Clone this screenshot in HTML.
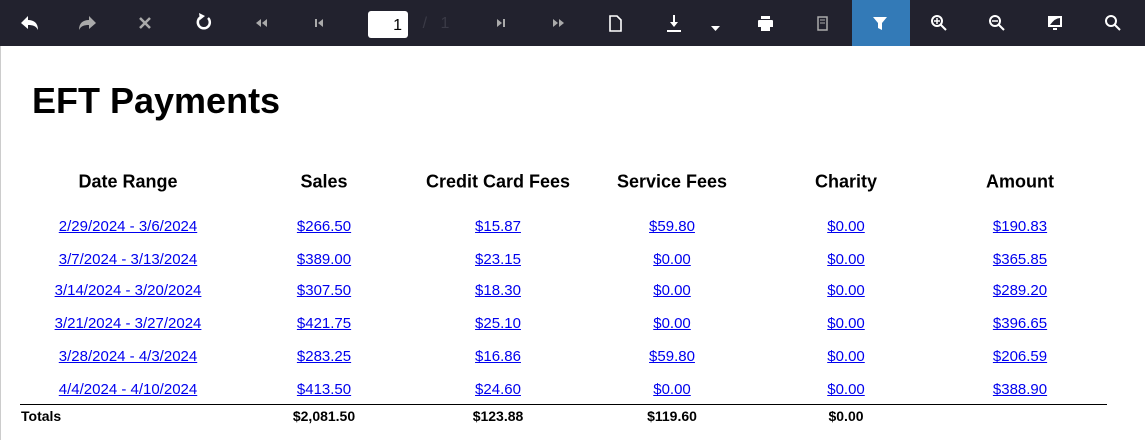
<!DOCTYPE html>
<html><head><meta charset="utf-8"><style>
body{margin:0;width:1145px;height:440px;overflow:hidden;background:#fff;font-family:"Liberation Sans",Arial,sans-serif;position:relative}
.tb{position:absolute;left:0;top:0;width:1145px;height:46px;background:#22222e}
.ic{position:absolute;top:23px;transform:translate(-50%,-50%);color:#fff;font-size:16px;line-height:1}
.filt{position:absolute;left:852px;top:0;width:58px;height:46px;background:#337ab7}
.pg{position:absolute;left:368px;top:11px;width:40px;height:27px;background:#fff;border-radius:3px;font-size:16px;text-align:right;box-sizing:border-box;padding:6px 6px 0 0;color:#000}
.lb{position:absolute;left:0;top:46px;width:1px;height:394px;background:#ccc}
h1{position:absolute;left:32px;top:80px;margin:0;font-size:36px;font-weight:bold}
.t{position:absolute;transform:translate(-50%,-50%);white-space:nowrap}
.h{font-size:18px;font-weight:bold}
a{color:#0000ee;text-decoration:underline;font-size:15px}
.tot{font-size:14px;font-weight:bold}
.line{position:absolute;left:20px;top:404px;width:1087px;height:1px;background:#000}
</style></head><body>
<div class="tb"></div>
<div class="filt"></div>
<svg style="position:absolute;left:0;top:0" width="1145" height="46">
<g fill="#fff">
<path d="M21 23 l7-7 v4 c6 0 10 3 10 10 c-2-4-5-5-10-5 v4z"/>
</g>
<path d="M96 23 l-7-7 v4 c-6 0-10 3-10 10 c2-4 5-5 10-5 v4z" fill="#aaa"/>
<path d="M140 18 l10 10 M150 18 l-10 10" stroke="#aaa" stroke-width="2.5"/>
<path d="M208 18 a6 6 0 1 1 -7 -1" stroke="#fff" stroke-width="2.5" fill="none"/><path d="M199 13 l6 3 -5 4z" fill="#fff"/>
<path d="M261 19 l-5 4 5 4z M267 19 l-5 4 5 4z" fill="#aaa"/>
<path d="M315 19 h2 v8 h-2z M323 19 l-5 4 5 4z" fill="#aaa"/>
<path d="M497 19 l5 4 -5 4z M503 19 h2 v8 h-2z" fill="#aaa"/>
<path d="M553 19 l5 4 -5 4z M559 19 l5 4 -5 4z" fill="#aaa"/>
<path d="M610 16 h7 l4 4 v11 h-11z" fill="none" stroke="#fff" stroke-width="1.6"/>
<path d="M667 30 h14 v2 h-14z M673 15 h2 v7 h3 l-4 5 -4-5 h3z" fill="#fff"/>
<path d="M711 26 h9 l-4.5 5z" fill="#fff"/>
<path d="M759 20 h13 a1 1 0 0 1 1 1 v6 h-15 v-6 a1 1 0 0 1 1-1z M761 16 h9 v3 h-9z M761 26 h9 v5 h-9z" fill="#fff"/>
<path d="M818 17 h9 v13 h-9z" fill="none" stroke="#aaa" stroke-width="1.5"/><path d="M820 20 h5 M820 23 h5" stroke="#aaa"/>
<path d="M873 17 h14 l-5 6 v7 l-4 -2 v-5z" fill="#fff"/>
<g fill="none" stroke="#fff" stroke-width="2"><circle cx="937" cy="21" r="5"/><path d="M941 25 l5 5"/><circle cx="995" cy="21" r="5"/><path d="M999 25 l5 5"/><circle cx="1111" cy="21" r="5"/><path d="M1115 25 l5 5"/></g>
<path d="M934 21 h6 M937 18 v6 M992 21 h6" stroke="#fff" stroke-width="1.5"/>
<path d="M1048 16 h14 v11 h-14z" fill="#fff"/><path d="M1050 25 q5-7 10-7 v7z" fill="#22222e"/><path d="M1053 28 h4 v2 h-4z" fill="#fff"/>
</svg>
<div class="pg">1</div>
<div class="ic" style="left:436px;top:24px;font-size:16px;color:#3a3a46">/&nbsp;&nbsp;&nbsp;1</div>
<div class="lb"></div>
<h1>EFT Payments</h1>
<div class="t h" style="left:128px;top:182px">Date Range</div>
<div class="t h" style="left:324px;top:182px">Sales</div>
<div class="t h" style="left:498px;top:182px">Credit Card Fees</div>
<div class="t h" style="left:672px;top:182px">Service Fees</div>
<div class="t h" style="left:846px;top:182px">Charity</div>
<div class="t h" style="left:1020px;top:182px">Amount</div>

<div class="t" style="left:128px;top:227px"><a>2/29/2024 - 3/6/2024</a></div>
<div class="t" style="left:324px;top:227px"><a>$266.50</a></div>
<div class="t" style="left:498px;top:227px"><a>$15.87</a></div>
<div class="t" style="left:672px;top:227px"><a>$59.80</a></div>
<div class="t" style="left:846px;top:227px"><a>$0.00</a></div>
<div class="t" style="left:1020px;top:227px"><a>$190.83</a></div>

<div class="t" style="left:128px;top:260px"><a>3/7/2024 - 3/13/2024</a></div>
<div class="t" style="left:324px;top:260px"><a>$389.00</a></div>
<div class="t" style="left:498px;top:260px"><a>$23.15</a></div>
<div class="t" style="left:672px;top:260px"><a>$0.00</a></div>
<div class="t" style="left:846px;top:260px"><a>$0.00</a></div>
<div class="t" style="left:1020px;top:260px"><a>$365.85</a></div>

<div class="t" style="left:128px;top:291px"><a>3/14/2024 - 3/20/2024</a></div>
<div class="t" style="left:324px;top:291px"><a>$307.50</a></div>
<div class="t" style="left:498px;top:291px"><a>$18.30</a></div>
<div class="t" style="left:672px;top:291px"><a>$0.00</a></div>
<div class="t" style="left:846px;top:291px"><a>$0.00</a></div>
<div class="t" style="left:1020px;top:291px"><a>$289.20</a></div>

<div class="t" style="left:128px;top:324px"><a>3/21/2024 - 3/27/2024</a></div>
<div class="t" style="left:324px;top:324px"><a>$421.75</a></div>
<div class="t" style="left:498px;top:324px"><a>$25.10</a></div>
<div class="t" style="left:672px;top:324px"><a>$0.00</a></div>
<div class="t" style="left:846px;top:324px"><a>$0.00</a></div>
<div class="t" style="left:1020px;top:324px"><a>$396.65</a></div>

<div class="t" style="left:128px;top:357px"><a>3/28/2024 - 4/3/2024</a></div>
<div class="t" style="left:324px;top:357px"><a>$283.25</a></div>
<div class="t" style="left:498px;top:357px"><a>$16.86</a></div>
<div class="t" style="left:672px;top:357px"><a>$59.80</a></div>
<div class="t" style="left:846px;top:357px"><a>$0.00</a></div>
<div class="t" style="left:1020px;top:357px"><a>$206.59</a></div>

<div class="t" style="left:128px;top:390px"><a>4/4/2024 - 4/10/2024</a></div>
<div class="t" style="left:324px;top:390px"><a>$413.50</a></div>
<div class="t" style="left:498px;top:390px"><a>$24.60</a></div>
<div class="t" style="left:672px;top:390px"><a>$0.00</a></div>
<div class="t" style="left:846px;top:390px"><a>$0.00</a></div>
<div class="t" style="left:1020px;top:390px"><a>$388.90</a></div>

<div class="line"></div>
<div class="tot" style="position:absolute;left:21px;top:408px">Totals</div>
<div class="t tot" style="left:324px;top:416px">$2,081.50</div>
<div class="t tot" style="left:498px;top:416px">$123.88</div>
<div class="t tot" style="left:672px;top:416px">$119.60</div>
<div class="t tot" style="left:846px;top:416px">$0.00</div>
</body></html>
